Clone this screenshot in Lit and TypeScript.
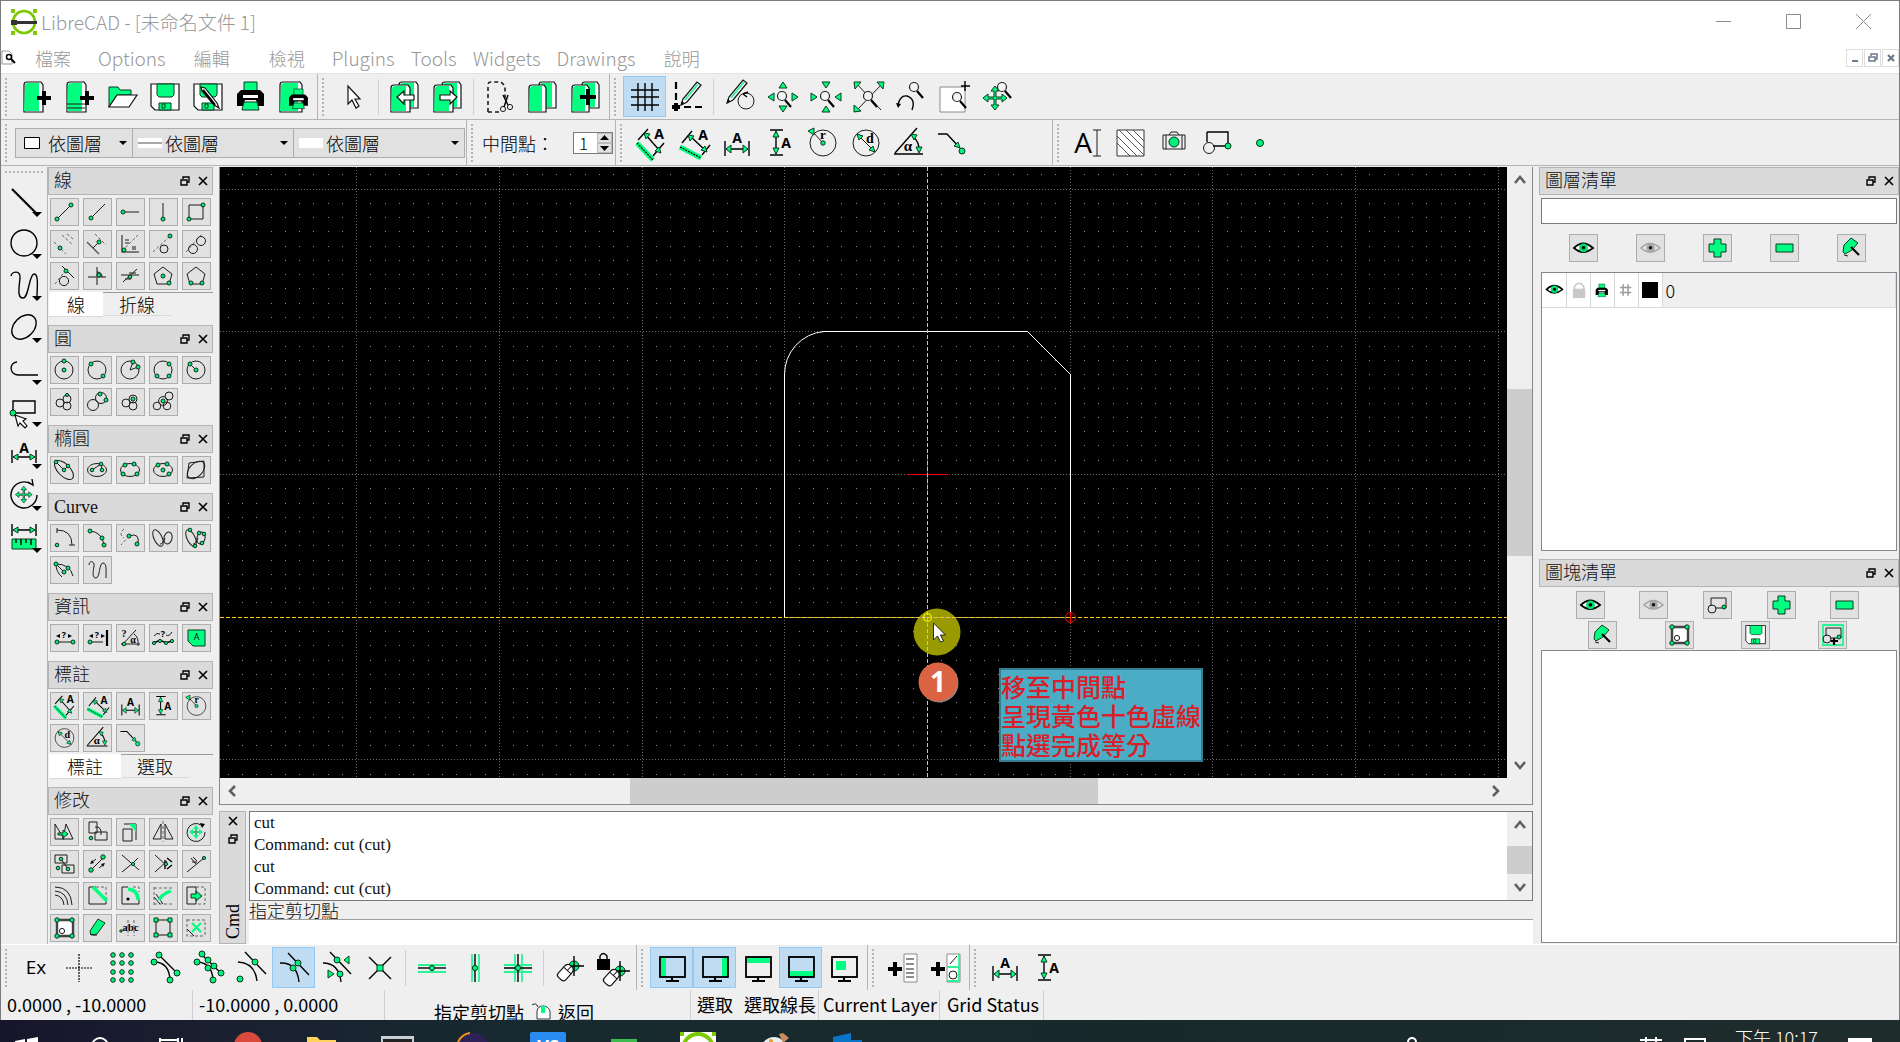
import { LitElement, html, svg, css, TemplateResult, SVGTemplateResult } from "lit";
import { customElement, property } from "lit/decorators.js";
import { classMap } from "lit/directives/class-map.js";

type Art = SVGTemplateResult | SVGTemplateResult[];

// Drawing helpers shared by all icons.
const line = (d: string, cls = "k") => svg`<path class="${cls}" d="${d}"></path>`;
const dots = (r: number, ...pts: number[][]) =>
  pts.map(([x, y]) => svg`<circle class="dot" cx="${x}" cy="${y}" r="${r}"></circle>`);
const ring = (x: number, y: number, r: number, cls = "k") =>
  svg`<circle class="${cls}" cx="${x}" cy="${y}" r="${r}"></circle>`;
const oval = (x: number, y: number, rx: number, ry: number, a = 0) =>
  svg`<ellipse class="k" cx="${x}" cy="${y}" rx="${rx}" ry="${ry}" transform="rotate(${a} ${x} ${y})"></ellipse>`;
const glyph = (x: number, y: number, size: number, t: string, cls = "t") =>
  svg`<text class="${cls}" x="${x}" y="${y}" font-size="${size}" text-anchor="middle">${t}</text>`;

// Small palette icons live in a 27x26 box that starts at 1,1.
const S = (a: unknown): [string, unknown] => ["1 1 27 26", a];
// Toolbar icons live in a 36x36 box.
const L = (a: unknown): [string, unknown] => ["0 0 36 36", a];

const page = (x: number, y: number, w: number, h: number) => svg`
  <path class="pw" d="M${x} ${y + 3} q0 -3 3 -3 h${w - 5} l2 3 v${h - 3} h-${w} z"></path>
  <path class="g" d="M${x + 1} ${y + 4} q0 -3 3 -3 h${w - 8} v${h - 2} h-${w - 4} z"></path>`;
const plus = (x: number, y: number, r: number) =>
  svg`<path d="M${x - 2} ${y - r} h4 v${r - 2} h${r - 2} v4 h-${r - 2} v${r - 2} h-4 v-${r - 2} h-${r - 2} v-4 h${r - 2} z"></path>`;
const floppy = svg`
  <path class="pw" d="M4 5 h28 v26 h-24 l-4 -4 z"></path>
  <path class="ga" d="M10 5 h17 v11 l-2 2 h-13 l-2 -2 z"></path>
  <path class="ga" d="M12 31 v-7 h12 v7 z"></path><path class="ga" d="M15 25 h3 v4 h-3 z"></path>`;
const lens = (x: number, y: number) => svg`
  <circle class="lens" cx="${x}" cy="${y}" r="4.5"></circle>
  <path class="k2" d="M${x + 3} ${y + 4} l6 7"></path>`;
const pencil = svg`
  <path class="pw" d="M11 26 l2 -6 l14 -17 l4 3 l-14 17 z"></path>
  <path class="gl" d="M15 21 L28 5"></path><path d="M11 26 l1 -4 l2 2 z"></path>`;
const moveCross = svg`
  <path class="ga" d="M14 6 l4 5 h-3 v6 h6 v-3 l5 4 l-5 4 v-3 h-6 v6 h3 l-4 5 l-4 -5 h3 v-6 h-6 v3 l-5 -4 l5 -4 v3 h6 v-6 h-3 z"></path>`;
const screen = (fill: SVGTemplateResult) => svg`
  <path class="k15" d="M6 7 h25 v20 h-25 z"></path>${fill}
  <path class="k15" d="M6 7 h25 v20 h-25 z"></path><path class="k2" d="M18 27 v4 M12 31 h13"></path>`;
const printer = (x: number, y: number, s: number) => svg`<g transform="translate(${x} ${y}) scale(${s})">
  <path class="ga" d="M7 0 h13 v9 h-13 z"></path>
  <path d="M4 8 h19 l4 4 v12 h-6 l-2 -6 h-11 l-2 6 h-6 v-12 z"></path>
  <path class="wf" d="M6 13 h15 v3 h-15 z"></path>
  <path class="ga" d="M7 20 h13 l2 8 h-17 z"></path></g>`;
const eye = (cls: string) => svg`
  <path class="${cls}" d="M5 14 Q14 5 24 14 Q14 22 5 14 z"></path>
  <circle class="${cls}i" cx="14.5" cy="13.8" r="4.4"></circle><circle cx="14.5" cy="13.8" r="1.8"></circle>`;
const loops = [oval(9, 14, 4, 9, -25), oval(19, 14, 4, 6, 15), line("M11 20 Q13 21 16 14")];
const block = [
  svg`<path class="wb" d="M7 6 h16 v16 h-16 z"></path>`, ring(12, 17, 2.6),
  ...dots(2.2, [7, 6], [22, 6], [7, 22], [22, 22]),
];
const floppySmall = svg`<g transform="translate(2 1) scale(.7)">${floppy}</g>`;
const editPen = [line("M7 21 l4 1", "k"), svg`<path class="ga" d="M6 18 l1 -7 l7 -7 l7 5 l-6 7 l-7 4 z"></path>`, line("M14 13 l8 8", "k2")];
const insert = [line("M8 7 h15 v10 h-11 M8 7 v8"), ring(9, 18, 4), ...dots(2, [21, 16])];
// A tilted mouse beside the relative zero mark centred at x,y.
const zeroMark = (x: number, y: number) => svg`
  <g transform="translate(${x} ${y})"><circle class="dot" cx="0" cy="0" r="5"></circle>
  <path class="k15" d="M0 -10 v20 M-9 0 h19"></path>
  <g transform="translate(-8 6) rotate(42)"><path class="pw" d="M-5 -3 q0 -5 5 -5 t5 5 v9 q0 3 -3 3 h-4 q-3 0 -3 -3 z"></path><path class="k" d="M-5 -2 h10 M0 -8 v6"></path></g></g>`;

const ICONS: Record<string, [string, unknown]> = {
  // File
  new: L([page(6, 3, 19, 30), plus(26, 19, 7)]),
  template: L([page(6, 3, 19, 30), line("M6 25 h18 M6 29 h18"), plus(26, 19, 7)]),
  open: L(svg`<path class="ga" d="M5 28 v-20 h9 l2 3 h11 v5 h-14 z"></path><path class="pw" d="M13 16 h20 l-8 12 h-20 z"></path>`),
  save: L(floppy),
  saveas: L([floppy, svg`<path class="pw" d="M11 8 l4 1 l12 15 l2 5 l-5 -3 l-12 -14 z"></path><path class="k2" d="M13 11 l12 15"></path>`]),
  print: L(printer(4, 3, 1)),
  preview: L([page(4, 3, 22, 30), printer(13, 10, 0.7)]),
  // Edit
  cursor: L(svg`<path class="pw" d="M13 7 v18 l4 -4 l4 8 l3 -2 l-4 -7 h5 z"></path>`),
  undo: L([page(12, 3, 19, 26), page(4, 6, 19, 27), svg`<path class="pw" d="M10 18 l7 -6 v4 h10 v5 h-10 v4 z"></path>`]),
  redo: L([page(12, 3, 19, 26), page(4, 6, 19, 27), svg`<path class="pw" d="M27 18 l-7 -6 v4 h-10 v5 h10 v4 z"></path>`]),
  cut: L([line("M6 33 v-27 q0 -3 3 -3 h10 l4 4 v12", "dash"), line("M6 33 h12", "dash"), ring(21, 30, 2.6), ring(28, 28, 2.6), line("M21 16 l5 10 M26 16 l-4 12", "k15")]),
  copy: L([page(14, 3, 17, 26), page(4, 6, 17, 27)]),
  paste: L([page(14, 3, 17, 26), page(4, 6, 17, 27), plus(20, 18, 8)]),
  // View
  grid: L(line("M11 4 v28 M18 4 v28 M25 4 v28 M4 11 h28 M4 18 h28 M4 26 h28", "k15")),
  draft: L([line("M6 3 v23", "dash2"), line("M3 28 h30", "dash2"), plus(6, 28, 4), pencil]),
  redraw: L([svg`<g transform="translate(-6 -2)">${pencil}</g>`, ring(24, 22, 8), line("M21 15 l5 -2 M21 15 l4 3", "k15")]),
  zoomin: L([svg`<path class="ga" d="M18 3 l4 6 h-8 z M18 33 l4 -6 h-8 z M3 18 l6 -4 v8 z M33 18 l-6 -4 v8 z"></path>`, lens(17, 17)]),
  zoomout: L([svg`<path class="ga" d="M18 9 l4 -6 h-8 z M18 27 l4 6 h-8 z M9 18 l-6 -4 v8 z M27 18 l6 -4 v8 z"></path>`, lens(17, 17)]),
  zoomauto: L([line("M6 5 L30 31 M31 5 L6 31"), svg`<path class="ga" d="M3 3 h7 l-6 7 z M33 3 h-7 l6 7 z M3 33 v-7 l7 6 z"></path>`, lens(17, 17)]),
  zoomprev: L([lens(20, 8), line("M4 26 q2 -10 9 -9 q9 3 5 14", "k15"), svg`<path d="M2 24 l5 1 l-3 4 z"></path>`]),
  zoomwin: L([svg`<path class="wg" d="M3 8 h25 v25 h-25 z"></path>`, lens(20, 18), line("M28 2 v10 M24 7 h9", "k15")]),
  pan: L([svg`<g transform="translate(1 1)">${moveCross}</g>`, lens(22, 8)]),
  // Dimensions
  dimaligned: L([line("M4 18 L20 35", "band"), line("M4 18 L20 35", "dash3"), line("M5 15 l10 -11 M20 31 l11 -13 M12 9 l15 17", "k15"), svg`<path class="ga" d="M11 8 l6 1 l-4 5 z M28 28 l-6 -2 l4 -4 z"></path>`, glyph(26, 14, 14, "A")]),
  dimlinear: L([line("M4 22 L25 33", "band"), line("M4 22 L25 33", "dash3"), line("M6 18 l10 -12 M26 30 l8 -10 M14 11 l15 14", "k15"), svg`<path class="ga" d="M12 10 l6 1 l-4 5 z M31 27 l-6 -2 l4 -4 z"></path>`, glyph(27, 15, 14, "A")]),
  dimhor: L([line("M6 16 v15 M30 16 v15 M7 24 h22", "k15"), svg`<path class="ga" d="M7 24 l5 -4 v8 z M29 24 l-5 -4 v8 z"></path>`, glyph(18, 18, 14, "A")]),
  dimver: L([line("M8 5 h13 M8 30 h13 M14 6 v23", "k15"), svg`<path class="ga" d="M14 6 l3 6 h-6 z M14 29 l3 -6 h-6 z"></path>`, glyph(24, 23, 14, "A")]),
  dimrad: L([ring(18, 18, 13), line("M7 6 L18 18"), svg`<path class="ga" d="M3 6 l6 -3 v7 z"></path>`, dots(2.2, [18, 18]), glyph(18, 14, 13, "r", "ts")]),
  dimdia: L([ring(18, 18, 13), line("M9 9 L27 27"), svg`<path class="ga" d="M9 9 l6 2 l-4 4 z M27 27 l-6 -2 l4 -4 z"></path>`, glyph(22, 18, 14, "d", "ts")]),
  dimang: L([line("M3 29 h29 M4 28 L26 3 M21 10 q8 7 7 17", "k15"), svg`<path class="ga" d="M20 9 l6 1 l-3 5 z M28 28 l-3 -6 h6 z"></path>`, glyph(17, 26, 15, "α", "ts")]),
  dimleader: L([line("M4 9 h9 l12 13", "k15"), svg`<path class="ga" d="M26 23 l-6 -2 l4 -4 z"></path>`, dots(3, [28, 26])]),
  // Text and blocks
  text: L([glyph(13, 28, 28, "A", "tl"), line("M23 5 h8 M27 5 v26 M23 31 h8")]),
  hatch: L([svg`<path class="wg2" d="M4 5 h27 v26 h-27 z"></path>`, line("M4 18 l13 13 M4 11 l20 20 M6 5 l25 25 M13 5 l18 18 M20 5 l11 11", "thin")]),
  image: L([line("M7 10 h22 v14 h-22 z M10 10 v14 M13 10 l2 -3 h6 l2 3 M26 10 v14"), dots(5, [18, 17])]),
  blockins: L([line("M8 7 h21 v14 h-15 M8 7 v10", "k15"), ring(10, 23, 5.5), dots(3, [29, 21])]),
  point: L(dots(3.5, [18, 18])),
  // Left tool column; the menu mark is drawn by the button
  vline: ["0 0 44 42", line("M9 10 L33 34", "k2")],
  vcircle: ["0 0 44 42", ring(21, 22, 13, "k15")],
  vcurve: ["0 0 44 42", line("M8 13 C9 8 18 7 17 15 C16 25 14 35 20 35 S26 11 31 11 S34 25 34 34", "k15")],
  vellipse: ["0 0 44 42", svg`<ellipse class="k15" cx="21" cy="22" rx="14" ry="10" transform="rotate(-45 21 22)"></ellipse>`],
  vpoly: ["0 0 44 42", line("M14 15 C6 16 6 27 15 28 H35", "k15")],
  vselect: ["0 0 44 42", [line("M10 12 h22 v12 h-22 z", "k15"), dots(3, [10, 24]), svg`<path class="pw" d="M12 26 l11 4 l-3 2 l4 5 l-2 2 l-5 -5 l-2 3 z"></path>`]],
  vdim: ["0 0 44 42", [line("M9 19 v13 M33 19 v13 M10 26 h22", "k15"), svg`<path class="ga" d="M10 26 l5 -3 v6 z M32 26 l-5 -3 v6 z"></path>`, glyph(21, 22, 14, "A")]],
  vmodify: ["0 0 44 42", [line("M34 22 A13 13 0 1 1 28 11", "k15"), line("M25 9 l5 3 l-1 -6", "k15"), svg`<g transform="translate(11 9) scale(.7)">${moveCross}</g>`]],
  vinfo: ["0 0 44 42", [line("M9 9 v12 M33 9 v12 M10 15 h22", "k15"), svg`<path class="ga" d="M10 15 l5 -3 v6 z M32 15 l-5 -3 v6 z M9 24 h24 v10 h-24 z"></path>`, line("M13 24 v4 M18 24 v6 M23 24 v4 M28 24 v6", "k15")]],
  // Lines
  l1: S([line("M7 21 L21 7"), dots(2, [7, 21], [21, 7])]),
  l2: S([line("M8 20 L22 6"), dots(2, [8, 20])]),
  l3: S([line("M7 14 H23"), dots(2, [7, 14])]),
  l4: S([line("M14 21 V5"), dots(2, [14, 21])]),
  l5: S([line("M7 7 H21 V21 H7 z"), dots(2, [21, 7], [7, 21])]),
  l6: S([line("M4 12 L16 24", "d2"), line("M12 5 L23 15", "d2"), line("M17 4 L23 9", "d2"), dots(2, [10, 18])]),
  l7: S([line("M4 12 L16 24", "kg"), line("M12 4 L23 15", "d2"), line("M10 18 L17 11"), dots(2, [16, 12])]),
  l8: S([line("M6 5 V22 H23", "kg"), line("M6 21 L22 5", "d2"), line("M9 10 h4 M9 13 h4 M16 17 h4 M16 19 h4"), dots(2, [8, 20])]),
  l9: S([line("M4 22 L21 6", "d2"), ring(15, 19, 4), dots(2, [21, 6])]),
  l10: S([line("M4 22 L20 4", "d2"), ring(11, 19, 4.5), ring(19, 11, 4.5)]),
  l11: S([line("M5 22 L15 9", "d2"), line("M12 4 L24 16"), ring(14, 19, 4.6), dots(2, [16, 9])]),
  l12: S([line("M5 15 H23 M14 5 V23", "kg"), dots(2, [16, 13]), line("M14 10 q5 0 5 5")]),
  l13: S([line("M5 13 H23 M7 20 L21 7"), line("M13 11 l7 0 M9 17 l6 0"), dots(1.8, [14, 15])]),
  l14: S([line("M14 5 L23 12 L20 22 H8 L5 12 z"), dots(2, [14, 14], [20, 21])]),
  l15: S([line("M14 5 L23 12 L20 22 H8 L5 12 z"), dots(2, [9, 21], [20, 21])]),
  // Circles
  c1: S([ring(14, 14, 9), dots(2, [14, 5], [14, 14])]),
  c2: S([ring(14, 14, 9), dots(2, [8, 8], [20, 20])]),
  c3: S([ring(14, 14, 9), line("M14 14 L17 6 M14 14 L22 11"), dots(2, [17, 6], [22, 11])]),
  c4: S([ring(14, 14, 9), dots(2, [20, 8], [8, 20], [20, 20])]),
  c5: S([ring(14, 14, 9), line("M8 8 L14 14"), dots(2, [8, 8], [14, 14])]),
  c6: S([ring(10, 15, 4), ring(17, 11, 4), ring(17, 18, 4), dots(1.6, [17, 7])]),
  c7: S([ring(10, 17, 5.5), ring(18, 10, 5.5), dots(2, [17, 6], [23, 12])]),
  c8: S([ring(10, 15, 4), ring(17, 11, 4), ring(17, 18, 4), dots(2, [17, 11])]),
  c9: S([ring(8, 18, 3.8), ring(18, 18, 3.8), ring(20, 8, 4), ring(14, 13, 4.4), dots(2, [14, 13])]),
  // Ellipses
  e1: S([oval(14, 14, 12, 6, 45), line("M6 6 L14 14 L18 10"), dots(1.8, [6, 6], [14, 14], [18, 10])]),
  e2: S([oval(14, 14, 9.5, 6.5), line("M9 14 L18 8 L19 14"), dots(1.8, [9, 14], [18, 8], [19, 14])]),
  e3: S([oval(14, 14, 9.5, 6.5), dots(2, [9, 9], [18, 8], [7, 18], [21, 18])]),
  e4: S([oval(14, 14, 9.5, 6.5), dots(2, [9, 9], [18, 8], [14, 14], [20, 18])]),
  e5: S([line("M7 7 L22 5 V21 L5 22 z"), oval(14, 14, 10.5, 6.5, -45)]),
  // Curves
  u1: S([line("M7 6 Q22 6 22 21 M7 4 v5 M19 21 h6"), dots(1.8, [7, 21])]),
  u2: S([line("M7 7 Q19 8 21 21"), dots(2, [7, 7], [19, 14], [21, 21])]),
  u3: S([line("M13 12 Q24 8 22 20"), line("M13 12 L5 21 M8 5 Q2 10 8 14", "d2"), dots(2, [13, 12], [21, 20])]),
  u4: S(loops),
  u5: S([...loops, dots(1.8, [8, 6], [13, 22], [17, 9], [22, 10], [20, 19])]),
  u6: S([line("M6 8 Q6 16 12 21 M6 8 Q20 8 23 20"), line("M6 8 L14 16 L18 12"), dots(2, [6, 8], [14, 16], [18, 12])]),
  u7: S(line("M6 9 C6 4 12 5 11 10 C10 16 9 22 13 22 S16 7 20 7 S23 15 23 22")),
  // Information
  i1: S([line("M7 18 H23"), dots(2, [7, 18], [23, 18]), glyph(14, 14, 9, "?"), svg`<path d="M6 12 l4 -2 v4 z M22 12 l-4 -2 v4 z"></path>`]),
  i2: S([line("M7 18 H20"), line("M24 6 V22", "k2"), dots(2, [7, 18]), glyph(14, 14, 9, "?"), svg`<path d="M6 12 l4 -2 v4 z M22 12 l-4 -2 v4 z"></path>`]),
  i3: S([line("M5 20 H24 M7 20 L20 6 M18 10 q5 3 4 12"), dots(1.8, [8, 20]), glyph(8, 13, 10, "?", "ts"), glyph(17, 19, 10, "α", "ts")]),
  i4: S([line("M5 19 L11 16 L17 19 L23 17", "k15"), dots(1.6, [5, 19], [11, 17], [17, 19], [23, 17]), glyph(14, 13, 9, "?"), line("M5 12 q3 -4 6 -2 M17 11 q3 2 6 -3")]),
  i5: S([svg`<path class="ga" d="M6 6 h17 v16 h-12 l-5 -5 z"></path>`, glyph(14.5, 16, 9, "A", "tl")]),
  // Modify
  m1: S([line("M5 6 V21 H14 z M16 6 L23 21 H13 z"), svg`<path class="ga" d="M8 15 h5 v-3 l5 4 l-5 4 v-3 h-5 z"></path>`]),
  m2: S([line("M6 4 h8 v11 h-8 z M12 14 h12 v8 h-12 z M12 9 q7 -1 6 8"), dots(1.8, [8, 20])]),
  m3: S([line("M7 11 h9 v12 h-9 z M8 6 h12 v16"), svg`<path class="g" d="M13 6 h7 v8 z"></path>`]),
  m4: S([line("M4 21 h8 v-15 z M24 21 h-8 v-15 z"), line("M14 3 V24", "d2")]),
  m5: S([line("M23 14 A9 9 0 1 1 19 7"), svg`<path d="M18 5 l5 1 l-3 4 z"></path><path class="gc" d="M14 9 v10 M9 14 h10"></path><path class="g" d="M14 7 l3 4 h-6 z M14 21 l3 -4 h-6 z M7 14 l4 -3 v6 z M21 14 l-4 -3 v6 z"></path>`]),
  m6: S([line("M5 5 h12 v8 h-12 z M12 15 h12 v8 h-12 z M11 9 L18 19"), dots(1.8, [8, 18], [11, 9], [18, 19])]),
  m7: S([line("M8 20 L20 8"), svg`<path d="M7 14 l2 -4 l2 3 z M22 13 l-2 4 l-2 -3 z"></path>`, line("M8 13 l5 -4 M16 18 l5 -4"), dots(2.2, [8, 20], [20, 7])]),
  m8: S([line("M6 5 L23 20 M6 22 L17 13 L22 8"), dots(1.6, [17, 14])]),
  m9: S([line("M6 5 L18 16 M6 22 L18 11"), line("M18 8 l5 4 M18 19 l5 -4 M16 10 v9", "k15"), dots(1.6, [17, 14])]),
  m10: S([line("M5 22 L22 8 M9 8 L14 14"), line("M11 7 l4 4 M10 12 l5 0"), dots(1.6, [22, 8])]),
  m11: S([line("M5 5 Q21 5 22 23 M5 9 Q17 10 18 23 M5 13 Q13 14 14 23")]),
  m12: S([line("M6 5 V22 H23 V15 M6 5 H13"), line("M13 5 H23 V14", "d2"), line("M10 5 L24 19", "gb")]),
  m13: S([line("M6 5 V22 H23 V16 M6 5 H12"), line("M17 5 H23 V10", "d2"), line("M12 7 Q22 8 22 18", "gb"), svg`<circle cx="12" cy="17" r="1.6"></circle>`]),
  m14: S([line("M5 6 H23 M5 5 V23 M5 22 H23", "d2"), line("M7 12 L14 22 M5 15 l6 7"), line("M10 18 Q13 12 22 9", "gb")]),
  m15: S([line("M5 5 h9 v17 h-9 z"), line("M14 5 h9 v17 h-9", "d2"), svg`<path class="ga" d="M9 12 h5 v-3 l6 5 l-6 5 v-3 h-5 z"></path>`]),
  m16: S(block),
  m17: S([svg`<path class="ga" d="M7 17 l8 -12 l7 4 l-8 11 l-6 1 z"></path>`, line("M7 20 q4 2 7 1")]),
  m18: S([glyph(14.5, 17, 11, "abc", "ts"), line("M12 6 v16 M18 6 v16", "d2"), dots(1.2, [5, 17])]),
  m19: S([line("M7 6 H21 V21 H7 z", "kg"), svg`<path class="ga" d="M5 4 h4 v4 h-4 z M19 4 h4 v4 h-4 z M5 19 h4 v4 h-4 z M19 19 h4 v4 h-4 z"></path>`]),
  m20: S([line("M5 6 H23 V22 M5 5 V22 H23", "d2"), line("M5 15 L12 22"), line("M10 9 l9 9 M19 9 l-9 9", "gx")]),
  // Snap
  ex: L(glyph(18, 24, 19, "Ex", "tl")),
  free: L([line("M18 4 v28 M5 18 h26", "dash3")]),
  snapgrid: L(dots(2.3, ...[5, 13, 22, 30].flatMap((y) => [9, 18, 27].map((x) => [x, y])))),
  snapend: L([line("M12 5 L30 23 M7 12 Q22 12 23 30", "k15"), dots(3, [12, 5], [7, 12], [30, 23], [23, 30])]),
  snapon: L([line("M12 5 L32 24 M6 12 Q22 12 23 30", "k15"), dots(3, [12, 4], [7, 12], [18, 10], [24, 16], [31, 23], [18, 18], [23, 30])]),
  snapcen: L([line("M12 2 L33 24 M5 12 Q22 13 24 31", "k15"), dots(3, [22, 12], [7, 29])]),
  snapmid: L([line("M12 3 L33 25 M4 13 Q21 12 23 32", "k15"), dots(3, [22, 13], [17, 18])]),
  snapdist: L([line("M11 2 L32 24 M4 13 Q20 13 22 32", "k15"), dots(3, [18, 10], [21, 24]), svg`<path class="ga" d="M25 10 l5 -4 v8 z M9 20 v8 l6 -4 z"></path>`]),
  snapint: L([line("M7 7 L29 29 M29 7 L7 29", "k15"), svg`<path class="ga" d="M15 15 h6 v6 h-6 z"></path>`]),
  reshor: L([line("M4 15 h28 M4 22 h28", "gl"), line("M4 18 h28", "k15"), dots(2.6, [18, 18])]),
  resver: L([line("M15 4 v28 M22 4 v28", "gl"), line("M18 4 v28", "k15"), dots(2.6, [18, 18])]),
  resort: L([line("M15 4 v28 M22 4 v28 M4 15 h28 M4 22 h28", "gl"), line("M18 4 v28 M4 18 h28", "k15"), dots(2.6, [18, 18])]),
  relzero: L(zeroMark(22, 16)),
  lockzero: L([zeroMark(25, 21), svg`<path d="M2 9 h13 v11 h-13 z"></path>`, line("M5 9 v-3 q3 -5 7 0 v3", "k15")]),
  // Docks
  d1: L(screen(svg`<path class="g" d="M7 8 h5 v18 h-5 z"></path>`)),
  d2: L(screen(svg`<path class="g" d="M25 8 h5 v18 h-5 z"></path>`)),
  d3: L(screen(svg`<path class="g" d="M7 8 h23 v5 h-23 z"></path>`)),
  d4: L(screen(svg`<path class="g" d="M7 21 h23 v5 h-23 z"></path>`)),
  d5: L(screen(svg`<path class="g" d="M10 11 h10 v9 h-10 z"></path>`)),
  addmenu: L([plus(10, 19, 7), svg`<path class="wg" d="M19 4 h13 v28 h-13 z"></path>`, line("M21 9 h8 M21 14 h8 M21 19 h8 M21 23 h8 M21 27 h8")]),
  addbar: L([plus(10, 19, 7), svg`<path class="wg" d="M19 4 h13 v28 h-13 z"></path>`, line("M31 4 v28 M19 17 h12 M19 31 h12", "gl"), line("M22 14 l7 -8"), ring(25, 25, 4)]),
  // Lists
  eye: S(eye("eg")),
  eyeoff: S(svg`<g opacity=".9">${eye("eo")}</g>`),
  add: S(svg`<path class="ga" d="M11 5 h7 v5 h5 v8 h-5 v5 h-7 v-5 h-5 v-8 h5 z"></path>`),
  remove: S(svg`<path class="ga" d="M6 10 h17 v8 h-17 z"></path>`),
  edit: S(editPen),
  block: S(block),
  binsert: S(insert),
  bsave: S(floppySmall),
  bnew: S([line("M5 4 h20 v20 h-20 z", "gl"), insert, line("M16 17 v7 M13 20 h7", "k2")]),
  printer: S(printer(5, 5, 0.68)),
  lock: S(svg`<path class="lk" d="M8 14 v-4 q6 -8 12 0 v4"></path><path class="lf" d="M6 13 h16 v12 h-16 z"></path>`),
  hash: S(line("M11 7 v14 M17 7 v14 M7 11 h14 M7 17 h14", "hs")),
};

const iconCss = css`
  svg { display: block; flex: none; overflow: visible; }
  svg text { font-family: "Open Sans", "Liberation Sans", sans-serif; }
  .k, .k15, .k2, .kg, .dash, .dash2, .dash3, .d2, .thin { fill: none; stroke: #1c1c1c; stroke-width: 1; }
  .k15 { stroke-width: 1.4; stroke: #000; }
  .k2 { stroke-width: 2.2; stroke: #000; }
  .kg { stroke: #5a5a5a; stroke-width: 1.5; }
  .thin { stroke: #444; stroke-width: .9; }
  .dash { stroke-dasharray: 4 3; stroke-width: 1.6; }
  .dash2 { stroke-dasharray: 7 4; stroke-width: 2.2; stroke: #000; }
  .dash3 { stroke-dasharray: 2 1; stroke-width: 1.2; stroke: #000; }
  .d2 { stroke: #666; stroke-dasharray: 3 2; }
  .dot { fill: #00f07c; stroke: #103020; stroke-width: 1; }
  .g { fill: #00ff80; }
  .ga { fill: #00ff80; stroke: #0b3a20; stroke-width: 1; }
  .gc { fill: none; stroke: #1fae68; stroke-width: 1.6; }
  .gl { fill: none; stroke: #2cf296; stroke-width: 1.8; }
  .gb { fill: none; stroke: #00ff80; stroke-width: 3.4; }
  .gx { fill: none; stroke: #00ff80; stroke-width: 2.2; }
  .band { fill: none; stroke: #00ff80; stroke-width: 5; }
  .pw { fill: #fff; stroke: #111; stroke-width: 1.2; }
  .wf { fill: #fff; }
  .wb { fill: #fff; stroke: #444; stroke-width: 2.4; }
  .wg { fill: #fff; stroke: #8a8a8a; stroke-width: 1; }
  .wg2 { fill: #fff; stroke: #333; stroke-width: 1; }
  .lens { fill: #f4f4f4; stroke: #222; stroke-width: 1.2; }
  .t { font-weight: 700; } .tl { font-weight: 400; }
  svg text.ts { font-family: "Liberation Serif", serif; font-weight: 700; }
  .eg { fill: #fff; stroke: #000; stroke-width: 1.8; } .egi { fill: #00e070; }
  .eo { fill: #e4e4e4; stroke: #999; stroke-width: 1.4; } .eoi { fill: #a4a4a4; }
  .lk { fill: none; stroke: #c8c8c8; stroke-width: 2; } .lf { fill: #c8c8c8; }
  .hs { fill: none; stroke: #9a9a9a; stroke-width: 1.8; }
`;

const icon = (name: string, w: number, h = w): TemplateResult => {
  const [box, art] = ICONS[name];
  return html`<svg width=${w} height=${h} viewBox=${box} aria-hidden="true">${art as Art}</svg>`;
};

const floatMark = html`<svg width="10" height="10" viewBox="0 0 10 10"><path d="M3 3V1H9V6H7M1 4H7V9H1z" fill="none" stroke="#000" stroke-width="1.4"/></svg>`;
const closeMark = html`<svg width="10" height="10" viewBox="0 0 10 10"><path d="M1 1L9 9M9 1L1 9" stroke="#000" stroke-width="1.6"/></svg>`;
const chevron = (d: string) => html`<svg width="14" height="14" viewBox="0 0 14 14"><path d=${d} fill="none" stroke="#606060" stroke-width="2.6"/></svg>`;
const UP = "M2 10L7 4L12 10", DOWN = "M2 4L7 10L12 4", LEFT = "M9 2L4 7L9 12", RIGHT = "M5 2L10 7L5 12";

@customElement("cad-dock")
class CadDock extends LitElement {
  @property() heading = "";
  @property({ attribute: false }) icons: string[] = [];
  @property({ attribute: false }) tabs: string[] = [];

  static styles = [iconCss, css`
    :host { display: block; }
    button { font: inherit; padding: 0; margin: 0; border: 0; background: none; color: inherit; }
    .head { box-sizing: border-box; height: 28px; display: flex; align-items: center; gap: 8px; padding: 0 4px 0 5px; background: #dadada; border: 1px solid #b4b4b4; }
    h2 { flex: 1; margin: 0; font: 300 18px/24px "Liberation Serif", "Noto Sans CJK TC", serif; color: #111; }
    .mark { width: 10px; height: 10px; display: block; }
    .grid { display: grid; grid-template-columns: repeat(5, 29px); gap: 4px; padding: 3px 2px 1px; }
    .cell { box-sizing: border-box; width: 29px; height: 28px; border: 1px solid #adadad; background: #e1e1e1; display: grid; place-items: center; }
    .tabs { display: flex; align-items: flex-start; height: 25px; margin: 1px 0 0 1px; }
    .tab { box-sizing: border-box; height: 24px; padding: 0 16px; font: 300 18px/20px "Noto Sans CJK TC", sans-serif; border-bottom: 1px solid #d9d9d9; }
    .tab.on { height: 25px; padding: 0 18px; background: #fff; }
    .rest { flex: 1; }
    .tab:not(.on), .rest { border-top: 1px solid #9b9b9b; }
  `];

  render() {
    return html`
      <div class="head"><h2>${this.heading}</h2>
        <button class="mark" aria-label="Float">${floatMark}</button>
        <button class="mark" aria-label="Close">${closeMark}</button></div>
      ${this.icons.length ? html`<div class="grid">${this.icons.map((n) => html`
        <button class="cell" aria-label=${n}>${icon(n, 27, 26)}</button>`)}</div>` : ""}
      ${this.tabs.length ? html`<div class="tabs">${this.tabs.map((t, i) => html`
        <button class=${classMap({ tab: true, on: i === 0 })}>${t}</button>`)}<span class="rest"></span></div>` : ""}
      <slot></slot>`;
  }
}

@customElement("cad-drawing")
class CadDrawing extends LitElement {
  static styles = css`
    :host { display: block; position: relative; overflow: hidden; background: #000; min-width: 0; min-height: 0; }
    svg { display: block; width: 100%; height: 100%; }
    .crisp { shape-rendering: crispEdges; fill: none; }
    .minor { stroke: #8a8a8a; }
    .major { stroke: #6a6a6a; stroke-dasharray: 1 2; }
    .cross { stroke: #ffc81e; stroke-dasharray: 4 2; }
    .red { stroke: #f00; } .white { stroke: #fff; } .picked { stroke: #8f9a86; }
    .white2 { stroke: #fff; fill: none; }
    .num { font: 700 28px "Open Sans", sans-serif; fill: #fff; text-anchor: middle; }
    .note { position: absolute; left: 779px; top: 501px; box-sizing: border-box; margin: 0; padding: 2px 0 1px; border: 2px solid #357d91; background: #4bacc6; color: #d81f2a; font: 500 25px/29px "Noto Sans CJK TC", sans-serif; width: 204px; white-space: nowrap; }
  `;

  // Grid lines are computed from the drawing origin and snapped to whole pixels.
  private gridPaths() {
    const ox = 707, oy = 307, step = 14.27;
    let minor = "", major = "";
    for (let i = -50; i <= 150; i++) {
      const x = Math.round(ox + i * step);
      if (x < 0) continue;
      if (i % 10 === 0) { major += `M${x}.5 0V1400`; continue; }
      for (let j = -22; j <= 60; j++) if (j % 10) minor += `M${x} ${Math.round(oy + j * step)}.5h1`;
    }
    for (let j = -20; j <= 60; j += 10) major += `M0 ${Math.round(oy + j * step)}.5H3000`;
    return { minor, major };
  }

  render() {
    const { minor, major } = this.gridPaths();
    return html`<svg role="img" aria-label="Drawing">
      <path class="crisp minor" d=${minor} /><path class="crisp major" d=${major} />
      <path class="crisp red" d="M687 307.5h41M707.5 287v41" />
      <path class="crisp white" d="M564.5 450V207M602 164.500H808M850.500 207V450" />
      <path class="white2" d="M564.500 208A43 43 0 0 1 604 164.500M807.500 164.500L850.500 207.500" />
      <circle cx="717" cy="465" r="23.500" fill="#999900" />
      <path class="crisp picked" d="M564 450.5H850" />
      <path class="crisp cross" d="M707.5 0V1400M0 450.5H3000" />
      <circle cx="707.5" cy="450.5" r="4" fill="none" stroke="#ff0" />
      <circle cx="850.5" cy="450.5" r="5" fill="none" stroke="#f00" /><path class="crisp red" d="M850.500 445v11" />
      <path d="M713.500 456v17l4 -4l3 6l3 -1l-3 -6h5z" fill="#fff" stroke="#222" />
      <circle cx="719" cy="516" r="19.500" fill="#888" /><circle cx="718" cy="515" r="19.500" fill="#db6344" />
      <text class="num" x="718" y="525">1</text>
    </svg>
    <p class="note">移至中間點<br />呈現黃色十色虛線<br />點選完成等分</p>`;
  }
}

const DOCKS: { heading: string; icons: string[]; tabs?: string[] }[] = [
  { heading: "線", icons: Array.from({ length: 15 }, (_, i) => `l${i + 1}`), tabs: ["線", "折線"] },
  { heading: "圓", icons: Array.from({ length: 9 }, (_, i) => `c${i + 1}`) },
  { heading: "橢圓", icons: Array.from({ length: 5 }, (_, i) => `e${i + 1}`) },
  { heading: "Curve", icons: Array.from({ length: 7 }, (_, i) => `u${i + 1}`) },
  { heading: "資訊", icons: Array.from({ length: 5 }, (_, i) => `i${i + 1}`) },
  { heading: "標註", icons: ["dimaligned", "dimlinear", "dimhor", "dimver", "dimrad", "dimdia", "dimang", "dimleader"], tabs: ["標註", "選取"] },
  { heading: "修改", icons: Array.from({ length: 20 }, (_, i) => `m${i + 1}`) },
];

const MENUS = ["檔案", "Options", "編輯", "檢視", "Plugins", "Tools", "Widgets", "Drawings", "說明"];

const TASKS = [
  svg`<path fill="#fff" d="M30 21l10 -2v4h-10zM42 19l11 -2v6h-11z"/>`,
  svg`<circle cx="40" cy="26" r="8" fill="none" stroke="#fff" stroke-width="2"/>`,
  svg`<path fill="none" stroke="#fff" stroke-width="2" d="M25 18v4M43 18v4M25 20h18M47 18v4"/>`,
  svg`<circle cx="38" cy="26" r="14" fill="#d94a3d"/>`,
  svg`<path fill="#ffd35c" d="M22 17h10l3 3h16v4h-29z"/>`,
  svg`<path fill="#222" stroke="#c9ced2" stroke-width="2" d="M22 17h31v8h-31z"/><path fill="#c9ced2" d="M22 16h31v3h-31z"/>`,
  svg`<circle cx="39" cy="28" r="15" fill="#2c2255"/><path d="M23 22q4 -8 12 -9" fill="none" stroke="#f7941e" stroke-width="2"/>`,
  svg`<path fill="#2a8cf0" d="M20 14q0 -2 2 -2h32q2 0 2 2v9h-36z"/><text x="38" y="33" font-size="18" font-weight="700" text-anchor="middle" fill="#fff" font-family="Open Sans, sans-serif">VS</text>`,
  svg`<path fill="#3dba4e" d="M26 19h26v4h-26z"/>`,
  svg`<path fill="#fff" d="M20 12h36v11h-36z"/><circle cx="38" cy="29" r="15" fill="none" stroke="#7dc900" stroke-width="4"/><path fill="#7dc900" d="M20 12h4v4h-4zM52 12h4v4h-4z"/>`,
  svg`<circle cx="39" cy="30" r="13" fill="#e8eef2"/><path fill="#c98b5a" d="M44 14l4 -1l6 5l-6 5z"/><circle cx="36" cy="21" r="2" fill="#e0a030"/>`,
  svg`<path fill="#0a74c9" d="M23 17l18 -4v10h-18zM41 20h11v3h-11z"/>`,
];

@customElement("app-root")
class AppRoot extends LitElement {
  static styles = [iconCss, css`
    :host { display: flex; flex-direction: column; height: 100vh; overflow: hidden; background: #efefef; color: #000; font: 18px/22px "Open Sans", "Noto Sans CJK TC", sans-serif; }
    button { font: inherit; padding: 0; margin: 0; border: 0; background: none; color: inherit; }
    .window { flex: 1; min-height: 0; display: flex; flex-direction: column; border: 1px solid #7c7c7c; border-bottom: 0; }
    .title { height: 42px; display: flex; align-items: center; background: #fff; color: #989898; padding-left: 10px; font-family: "Noto Sans CJK TC", sans-serif; font-weight: 300; }
    .title h1 { flex: 1; margin: 0 0 0 4px; font-size: 19px; line-height: 24px; font-weight: 300; }
    .winbtn { width: 70px; height: 42px; display: grid; place-items: center; }
    .menu { height: 30px; display: flex; align-items: center; background: #fff; border-bottom: 1px solid #e4e4e4; color: #989898; }
    .menu .item { padding: 0 8px; line-height: 24px; font-family: "Noto Sans CJK TC", sans-serif; font-weight: 300; font-size: 19px; }
    .menu .wide { padding: 0 19px 0 20px; font-size: 18px; }
    .fill { flex: 1; }
    .mdi { box-sizing: border-box; width: 17px; height: 18px; border: 1px solid #ddd; margin-left: 1px; display: grid; place-items: center; }
    .row { box-sizing: border-box; height: 46px; display: flex; border-bottom: 1px solid #b4b4b4; }
    .bar { display: flex; align-items: center; padding-right: 2px; border-right: 1px solid #b4b4b4; }
    .bar:last-child { border-right: 0; }
    .bar.long { padding-right: 79px; }
    .bar.docked { padding-right: 1px; }
    .grip { width: 2px; height: 38px; margin: 0 7px 0 4px; background: repeating-linear-gradient(#b4b4b4 0 2px, transparent 2px 4px); }
    .sep { width: 1px; height: 36px; margin: 0 4px; background: #cfcfcf; }
    .tool { box-sizing: border-box; width: 43px; height: 41px; display: grid; place-items: center; border: 1px solid transparent; }
    .tool.on { background: #c0dcf3; border-color: #90c8f6; }
    .combo { box-sizing: border-box; height: 30px; display: flex; align-items: center; background: #e1e1e1; border: 1px solid #adadad; padding: 0 4px 0 8px; }
    .combo + .combo { border-left: 0; padding-left: 5px; }
    .combo select { flex: 1; min-width: 0; appearance: none; border: 0; background: none; padding: 0 0 0 8px; font: 300 18px/26px "Noto Sans CJK TC", sans-serif; color: #000; }
    .combo + .combo select { padding-left: 3px; }
    .w1 { width: 118px; margin-left: 1px; } .w2 { width: 161px; } .w3 { width: 171px; }
    .mid { margin: 0 19px 0 2px; font: 300 18px/26px "Noto Sans CJK TC", sans-serif; }
    .spin { box-sizing: border-box; width: 40px; height: 22px; display: flex; background: #fff; border: 1px solid #7a7a7a; }
    .spin input { flex: 1; min-width: 0; width: 10px; border: 0; padding: 0 0 0 5px; background: none; appearance: textfield; font: 300 17px/20px "Noto Sans CJK TC", sans-serif; }
    .spin input::-webkit-inner-spin-button { display: none; }
    .steps { width: 15px; display: grid; background: #e1e1e1; }
    .steps button { display: grid; place-items: center; border: 1px solid #bcbcbc; }
    .main { flex: 1; min-height: 0; display: flex; padding-top: 1px; }
    .vtools { box-sizing: border-box; width: 47px; padding: 3px 0 0 2px; border-right: 1px solid #b4b4b4; }
    .vgrip { width: 38px; height: 2px; margin: 1px 0 6px 2px; background: repeating-linear-gradient(90deg, #b4b4b4 0 2px, transparent 2px 4px); }
    .vtool { display: block; width: 44px; height: 42px; position: relative; }
    .vtool::after { content: ""; position: absolute; left: 29px; top: 33px; border: 5px solid transparent; border-top-color: #000; border-bottom: 0; }
    .docks { width: 165px; display: flex; flex-direction: column; gap: 8px; }
    .centre { flex: 1; min-width: 0; margin: 0 6px; display: flex; flex-direction: column; gap: 6px; }
    .frame { flex: 1; min-height: 0; display: grid; grid-template: 1fr 26px / 1fr 25px; border: 1px solid #828790; border-top: 0; }
    .vbar, .hbar { display: flex; align-items: center; }
    .vbar { flex-direction: column; }
    .sb { width: 25px; height: 26px; display: grid; place-items: center; flex: none; }
    .thumb { background: #cdcdcd; align-self: stretch; }
    .cmd { height: 133px; display: flex; gap: 3px; }
    .cmdhead { box-sizing: border-box; width: 27px; display: flex; flex-direction: column; align-items: center; gap: 8px; padding: 4px 0; background: #dadada; border: 1px solid #b4b4b4; }
    .cmdhead h2 { margin: auto 0 0; writing-mode: vertical-rl; rotate: 180deg; font: 18px/22px "Liberation Serif", serif; }
    .cmdbody { flex: 1; min-width: 0; display: flex; flex-direction: column; }
    .log { box-sizing: border-box; height: 90px; display: flex; border: 1px solid #7a7a7a; background: #fff; }
    .log pre { flex: 1; margin: 0; padding-left: 4px; font: 17px/22px "Liberation Serif", serif; color: #111; }
    .log .vbar { background: #efefef; width: 25px; }
    .prompt { height: 18px; font: 300 18px/18px "Noto Sans CJK TC", sans-serif; color: #111; }
    .cmdin { flex: 1; min-height: 0; width: 100%; box-sizing: border-box; border: 0; border-top: 1px solid #a0a0a0; background: #fff; font: 17px "Liberation Serif", serif; }
    .side { width: 360px; display: flex; flex-direction: column; gap: 8px; }
    .side cad-dock { flex: none; }
    .body { display: flex; flex-direction: column; padding: 0 2px; }
    .find { box-sizing: border-box; width: 100%; height: 26px; border: 1px solid #7a7a7a; margin: 3px 0 0; background: #fff; }
    .btns { display: flex; justify-content: space-evenly; padding: 4px 3px 0 0; }
    .btns.layers { justify-content: space-between; padding: 10px 31px 10px 28px; }
    .btns + .btns { padding: 2px 3px 1px 0; }
    .cell { box-sizing: border-box; width: 29px; height: 28px; border: 1px solid #adadad; background: #e1e1e1; display: grid; place-items: center; }
    .list { box-sizing: border-box; border: 1px solid #828790; background: #fff; }
    .list.l { height: 279px; }
    .blocks { flex: 1; min-height: 0; display: flex; flex-direction: column; }
    .list.b { flex: 1; margin: 0 2px 1px; }
    table { width: 100%; border-collapse: collapse; table-layout: fixed; }
    td { box-sizing: border-box; height: 34px; padding: 0; border-right: 1px solid #d9d9d9; border-bottom: 1px solid #d9d9d9; width: 24px; overflow: hidden; }
    td svg { margin: 0 auto; }
    td.end svg { margin: 0 0 0 auto; }
    td.name { width: auto; background: #efefef; padding-left: 3px; font: 300 18px/24px "Noto Sans CJK TC", sans-serif; }
    .swatch { width: 16px; height: 16px; margin: 0 auto; background: #000; }
    .low { border-bottom: 0; border-top: 1px solid #fff; }
    .status { height: 30px; display: flex; font-family: "Noto Sans CJK TC", sans-serif; font-weight: 400; overflow: hidden; }
    .status > * { box-sizing: border-box; height: 30px; padding: 3px 2px 0 4px; border-right: 1px solid #cfcfcf; white-space: nowrap; line-height: 22px; }
    .status .coord { width: 192px; padding-left: 6px; }
    .status .msg { width: 306px; display: flex; gap: 7px; padding: 11px 0 0 49px; }
    .status .s1 { padding: 3px 7px 0 6px; border-right: 0; }
    .status .s3 { padding: 3px 4px 0 7px; }
    .task { height: 22px; overflow: hidden; display: flex; background: linear-gradient(90deg, #17152b, #1a2130 12%, #172a30 28%, #17292b 60%, #1f2c2c); color: #fff; }
    .task .apps { display: flex; margin-left: -15px; flex: 1; }
    .task .apps button { width: 75px; height: 22px; }
    .clock { width: 83px; margin: 6px 30px 0 27px; font: 300 18px/22px "Noto Sans CJK TC", sans-serif; white-space: nowrap; }
  `];

  private tool(name: string, on = false) {
    return html`<button class=${classMap({ tool: true, on })} aria-label=${name} aria-pressed=${on ? "true" : "false"}>${icon(name, 36)}</button>`;
  }

  private bar(names: string[], on: string[] = [], cls = "") {
    return html`<div class="bar ${cls}" role="toolbar"><span class="grip"></span>
      ${names.map((n) => (n === "|" ? html`<span class="sep"></span>` : this.tool(n, on.includes(n))))}</div>`;
  }

  private combo(cls: string, name: string, swatch: TemplateResult) {
    return html`<div class="combo ${cls}">${swatch}
      <select aria-label=${name}><option>依圖層</option></select>
      <svg width="9" height="6" viewBox="0 0 9 6"><path d="M0 1h8l-4 4z" /></svg></div>`;
  }

  private scroll(dir: "v" | "h", before: number, thumb: number, after: number) {
    const v = dir === "v";
    return html`<div class=${v ? "vbar" : "hbar"}>
      <span class="sb">${chevron(v ? UP : LEFT)}</span><span style="flex:${before}"></span>
      <span class="thumb" style="flex:${thumb}"></span><span style="flex:${after}"></span>
      <span class="sb">${chevron(v ? DOWN : RIGHT)}</span></div>`;
  }

  private cells(names: string[], cls = "") {
    return html`<div class="btns ${cls}">${names.map((n) => html`<button class="cell" aria-label=${n}>${icon(n, 27, 26)}</button>`)}</div>`;
  }

  render() {
    return html`
      <div class="window">
        <header class="title">
          <svg width="26" height="26" viewBox="0 0 26 26"><circle cx="13" cy="13" r="11" fill="none" stroke="#7dc900" stroke-width="2.600"/><path fill="#7dc900" d="M0 0h4v4h-4zM22 0h4v4h-4zM0 22h4v4h-4zM22 22h4v4h-4z"/><path fill="#333" d="M0 11h6v1h20v3h-20v1h-6z"/></svg>
          <h1>LibreCAD - [未命名文件 1]</h1>
          <button class="winbtn" aria-label="Minimize"><svg width="16" height="16"><path d="M0 7.500h15" stroke="#8c8c8c"/></svg></button>
          <button class="winbtn" aria-label="Maximize"><svg width="16" height="16"><path d="M.5 .5h14v14h-14z" fill="none" stroke="#8c8c8c"/></svg></button>
          <button class="winbtn" aria-label="Close"><svg width="16" height="16"><path d="M0 0l15 15M15 0l-15 15" stroke="#8c8c8c"/></svg></button>
        </header>
        <nav class="menu">
          <svg width="14" height="16" viewBox="0 0 14 16"><path d="M1 1h7l3 3v10h-10z" fill="#fff" stroke="#999"/><circle cx="8" cy="7" r="2.500" fill="none" stroke="#000" stroke-width="1.500"/><path d="M10 9l4 4" stroke="#000" stroke-width="2"/></svg>
          ${MENUS.map((m) => html`<button class=${classMap({ item: true, wide: m.charCodeAt(0) > 255 })}>${m}</button>`)}
          <span class="fill"></span>
          <button class="mdi" aria-label="Minimize document"><svg width="12" height="12"><path d="M3 9h6" stroke="#6b7a8c" stroke-width="2"/></svg></button>
          <button class="mdi" aria-label="Restore document"><svg width="12" height="12"><path d="M4 4V2h6v5h-2M2 5h6v4h-6z" fill="none" stroke="#6b7a8c" stroke-width="1.500"/></svg></button>
          <button class="mdi" aria-label="Close document"><svg width="12" height="12"><path d="M3 3l6 6M9 3l-6 6" stroke="#6b7a8c" stroke-width="2.200"/></svg></button>
        </nav>
        <div class="row">
          ${this.bar(["new", "template", "open", "save", "saveas", "print", "preview"])}
          ${this.bar(["cursor", "|", "undo", "redo", "|", "cut", "copy", "paste"])}
          ${this.bar(["grid", "draft", "|", "redraw", "zoomin", "zoomout", "zoomauto", "zoomprev", "zoomwin", "pan"], ["grid"])}
        </div>
        <div class="row">
          <div class="bar docked"><span class="grip"></span>
            ${this.combo("w1", "Color", html`<svg width="16" height="12"><path d="M.5 .5h15v11h-15z" fill="#fff" stroke="#000"/></svg>`)}
            ${this.combo("w2", "Width", html`<svg width="24" height="10"><path fill="#fff" d="M0 0h24v10h-24z"/><path d="M0 5h24" stroke="#888" stroke-width="1.500"/></svg>`)}
            ${this.combo("w3", "Line type", html`<svg width="24" height="10"><path fill="#fff" d="M0 0h24v10h-24z"/></svg>`)}
          </div>
          <div class="bar"><span class="grip"></span>
            <label class="mid" for="mid">中間點：</label>
            <div class="spin"><input id="mid" type="number" value="1" /><span class="steps">
              <button aria-label="Increase"><svg width="9" height="6"><path d="M0 5h9l-4.500 -5z"/></svg></button>
              <button aria-label="Decrease"><svg width="9" height="6"><path d="M0 1h9l-4.500 5z"/></svg></button></span></div>
          </div>
          ${this.bar(["dimaligned", "dimlinear", "dimhor", "dimver", "dimrad", "dimdia", "dimang", "dimleader"], [], "long")}
          ${this.bar(["text", "hatch", "image", "blockins", "point"])}
        </div>
        <div class="main">
          <div class="vtools"><div class="vgrip"></div>
            ${["vline", "vcircle", "vcurve", "vellipse", "vpoly", "vselect", "vdim", "vmodify", "vinfo"].map((n) => html`
              <button class="vtool" aria-label=${n}>${icon(n, 44, 42)}</button>`)}
          </div>
          <div class="docks">${DOCKS.map((d) => html`<cad-dock .heading=${d.heading} .icons=${d.icons} .tabs=${d.tabs ?? []}></cad-dock>`)}</div>
          <div class="centre">
            <div class="frame">
              <cad-drawing></cad-drawing>${this.scroll("v", 196, 167, 196)}${this.scroll("h", 385, 467, 384)}
            </div>
            <section class="cmd">
              <div class="cmdhead"><button aria-label="Close">${closeMark}</button><button aria-label="Float">${floatMark}</button><h2>Cmd</h2></div>
              <div class="cmdbody">
                <div class="log"><pre>cut
Command: cut (cut)
cut
Command: cut (cut)</pre>${this.scroll("v", 8, 27, 0)}</div>
                <label class="prompt" for="cmd">指定剪切點</label>
                <input class="cmdin" id="cmd" type="text" />
              </div>
            </section>
          </div>
          <div class="side">
            <cad-dock heading="圖層清單">
              <div class="body">
                <input class="find" type="search" aria-label="圖層清單" />
                ${this.cells(["eye", "eyeoff", "add", "remove", "edit"], "layers")}
                <div class="list l"><table><tbody><tr>
                  <td class="end">${icon("eye", 23)}</td><td class="end">${icon("lock", 21)}</td><td>${icon("printer", 18)}</td><td>${icon("hash", 22)}</td>
                  <td><div class="swatch"></div></td><td class="name">0</td></tr></tbody></table></div>
              </div>
            </cad-dock>
            <div class="blocks">
              <cad-dock heading="圖塊清單">
                <div class="body">
                  ${this.cells(["eye", "eyeoff", "binsert", "add", "remove"])}
                  ${this.cells(["edit", "block", "bsave", "bnew"])}
                </div>
              </cad-dock>
              <div class="list b"></div>
            </div>
          </div>
        </div>
        <div class="row low">
          ${this.bar(["ex", "free", "snapgrid", "snapend", "snapon", "snapcen", "snapmid", "snapdist", "snapint", "|", "reshor", "resver", "resort", "|", "relzero", "lockzero"], ["snapmid"])}
          ${this.bar(["d1", "d2", "d3", "d4", "d5"], ["d1", "d2", "d4"])}
          ${this.bar(["addmenu", "addbar"])}
          ${this.bar(["dimhor", "dimver"])}
        </div>
        <footer class="status">
          <span class="coord">0.0000 , -10.0000</span><span class="coord">-10.0000 , 0.0000</span>
          <span class="msg">指定剪切點<svg width="20" height="20" viewBox="0 0 20 20"><path d="M1 4q4 -3 6 2" fill="none" stroke="#222"/><path d="M6 18v-8q1 -5 6 -5t7 5v8z" fill="#fff" stroke="#333"/><path d="M10 5h4v7h-4z" class="g"/></svg>返回</span>
          <span class="s1">選取</span><span>選取線長</span><span>Current Layer</span><span class="s3">Grid Status</span>
        </footer>
      </div>
      <div class="task">
        <div class="apps">${TASKS.map((t, i) => html`<button aria-label="App ${i + 1}"><svg width="75" height="22" viewBox="0 0 75 22">${t}</svg></button>`)}</div>
        <svg width="310" height="22"><circle cx="14" cy="22" r="4" fill="none" stroke="#fff" stroke-width="2"/><path d="M242 20h22M248 17v5M258 17v5" stroke="#fff" stroke-width="2"/><path d="M287 22v-3h20v3" fill="none" stroke="#fff" stroke-width="2"/></svg>
        <span class="clock">下午 10:17</span>
        <svg width="52" height="22"><path d="M0 18h24v4h-24z" fill="#fff"/></svg>
      </div>`;
  }
}
